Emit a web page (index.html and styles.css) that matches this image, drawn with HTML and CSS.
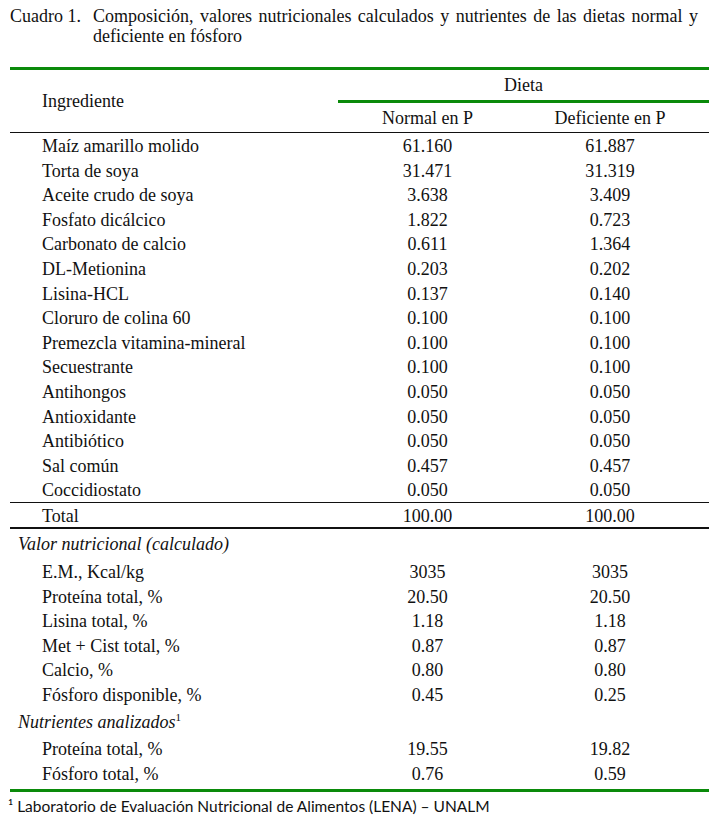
FILE: index.html
```html
<!DOCTYPE html>
<html lang="es">
<head>
<meta charset="utf-8">
<title>Cuadro 1</title>
<link rel="stylesheet" href="styles.css">
</head>
<body>
<div class="page">
  <div class="caption">
    <span class="cap-label">Cuadro 1.</span>
    <span class="cap-text">Composición, valores nutricionales calculados y nutrientes de las dietas normal y deficiente en fósforo</span>
  </div>

  <div class="tbl">
    <div class="head">
      <div class="h-ing">Ingrediente</div>
      <div class="h-diet">
        <div class="h-dieta">Dieta</div>
        <div class="h-sub">
          <div class="c2">Normal en P</div>
          <div class="c3">Deficiente en P</div>
        </div>
      </div>
    </div>

    <div class="body">
      <div class="row"><div class="c1">Maíz amarillo molido</div><div class="c2">61.160</div><div class="c3">61.887</div></div>
      <div class="row"><div class="c1">Torta de soya</div><div class="c2">31.471</div><div class="c3">31.319</div></div>
      <div class="row"><div class="c1">Aceite crudo de soya</div><div class="c2">3.638</div><div class="c3">3.409</div></div>
      <div class="row"><div class="c1">Fosfato dicálcico</div><div class="c2">1.822</div><div class="c3">0.723</div></div>
      <div class="row"><div class="c1">Carbonato de calcio</div><div class="c2">0.611</div><div class="c3">1.364</div></div>
      <div class="row"><div class="c1">DL-Metionina</div><div class="c2">0.203</div><div class="c3">0.202</div></div>
      <div class="row"><div class="c1">Lisina-HCL</div><div class="c2">0.137</div><div class="c3">0.140</div></div>
      <div class="row"><div class="c1">Cloruro de colina 60</div><div class="c2">0.100</div><div class="c3">0.100</div></div>
      <div class="row"><div class="c1">Premezcla vitamina-mineral</div><div class="c2">0.100</div><div class="c3">0.100</div></div>
      <div class="row"><div class="c1">Secuestrante</div><div class="c2">0.100</div><div class="c3">0.100</div></div>
      <div class="row"><div class="c1">Antihongos</div><div class="c2">0.050</div><div class="c3">0.050</div></div>
      <div class="row"><div class="c1">Antioxidante</div><div class="c2">0.050</div><div class="c3">0.050</div></div>
      <div class="row"><div class="c1">Antibiótico</div><div class="c2">0.050</div><div class="c3">0.050</div></div>
      <div class="row"><div class="c1">Sal común</div><div class="c2">0.457</div><div class="c3">0.457</div></div>
      <div class="row"><div class="c1">Coccidiostato</div><div class="c2">0.050</div><div class="c3">0.050</div></div>
    </div>

    <div class="row total"><div class="c1">Total</div><div class="c2">100.00</div><div class="c3">100.00</div></div>

    <div class="section">Valor nutricional (calculado)</div>
    <div class="row"><div class="c1">E.M., Kcal/kg</div><div class="c2">3035</div><div class="c3">3035</div></div>
    <div class="row"><div class="c1">Proteína total, %</div><div class="c2">20.50</div><div class="c3">20.50</div></div>
    <div class="row"><div class="c1">Lisina total, %</div><div class="c2">1.18</div><div class="c3">1.18</div></div>
    <div class="row"><div class="c1">Met + Cist total, %</div><div class="c2">0.87</div><div class="c3">0.87</div></div>
    <div class="row"><div class="c1">Calcio, %</div><div class="c2">0.80</div><div class="c3">0.80</div></div>
    <div class="row"><div class="c1">Fósforo disponible, %</div><div class="c2">0.45</div><div class="c3">0.25</div></div>

    <div class="section sec2">Nutrientes analizados<sup>1</sup></div>
    <div class="row"><div class="c1">Proteína total, %</div><div class="c2">19.55</div><div class="c3">19.82</div></div>
    <div class="row last"><div class="c1">Fósforo total, %</div><div class="c2">0.76</div><div class="c3">0.59</div></div>
  </div>

  <div class="footnote">¹ Laboratorio de Evaluación Nutricional de Alimentos (LENA) – UNALM</div>
</div>
</body>
</html>
```

FILE: styles.css
```css
html, body {
  margin: 0;
  padding: 0;
  background: #ffffff;
}

body {
  font-family: "Liberation Serif", "Times New Roman", serif;
  font-size: 18px;
  color: #111111;
}

.page {
  width: 719px;
}

.caption {
  display: flex;
  padding: 6px 0 0 10px;
  line-height: 20px;
  height: 67px;
  box-sizing: border-box;
}

.cap-label {
  flex: 0 0 83px;
  white-space: nowrap;
}

.cap-text {
  flex: 0 0 605px;
  text-align: justify;
}

.tbl {
  margin-left: 10px;
  width: 699px;
  border-top: 3px solid #0a8a0a;
  border-bottom: 3px solid #0a8a0a;
}

.head {
  display: flex;
  border-bottom: 1px solid #111111;
}

.h-ing {
  width: 328px;
  padding-left: 32px;
  box-sizing: border-box;
  display: flex;
  align-items: center;
}

.h-diet {
  width: 371px;
}

.h-dieta {
  height: 30px;
  line-height: 31px;
  text-align: center;
  border-bottom: 3px solid #0a8a0a;
}

.h-sub {
  display: flex;
  height: 29px;
  line-height: 31px;
}

.h-sub .c2 {
  width: 179px;
  text-align: center;
}

.h-sub .c3 {
  width: 192px;
  padding-right: 6px;
  box-sizing: border-box;
  text-align: center;
}

.row {
  display: grid;
  grid-template-columns: 328px 179px 192px;
  height: 24.6px;
  line-height: 26px;
}

.row .c1 {
  padding-left: 32px;
}

.row .c2 {
  text-align: center;
}

.row .c3 {
  text-align: center;
  padding-right: 6px;
}

.body {
  border-bottom: 1px solid #111111;
}

.total {
  height: 24px;
  line-height: 26px;
  border-bottom: 2.5px solid #111111;
}

.section {
  font-style: italic;
  padding-left: 8px;
  height: 30px;
  line-height: 31px;
}

.sec2 {
  height: 30px;
  line-height: 33px;
}

.section sup {
  font-style: normal;
  font-size: 11px;
  line-height: 0;
  vertical-align: 7px;
}

.last {
  height: 28px;
}

.footnote {
  font-family: "Lato", "Noto Sans", sans-serif;
  font-size: 15.5px;
  padding-left: 8px;
  line-height: 24px;
  margin-top: 2px;
}
```
